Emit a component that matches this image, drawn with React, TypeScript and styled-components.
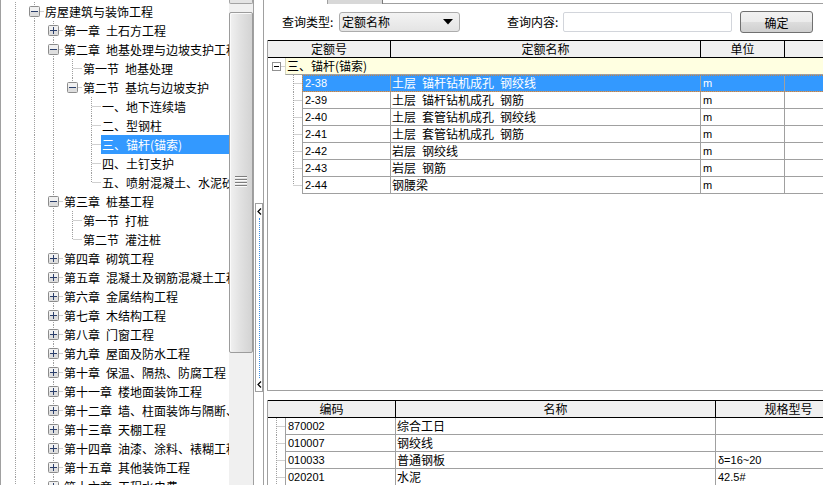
import React from "react";
import styled, { createGlobalStyle, css } from "styled-components";

const CJK = `"Noto Sans CJK SC", "Liberation Sans", sans-serif`;
const LATIN = `"Liberation Sans", "Noto Sans CJK SC", sans-serif`;

const GlobalStyle = createGlobalStyle`
  html, body { margin: 0; padding: 0; background: #fff; }
  body { font-family: ${CJK}; font-size: 12px; color: #000; }
`;

const Screen = styled.div`
  display: flex;
  width: 823px;
  height: 485px;
  overflow: hidden;
  background: #fff;
  font-family: ${CJK};
  font-size: 12px;
`;

/* ---------- left tree ---------- */
const TreePane = styled.div`
  width: 229px;
  flex: none;
  box-sizing: border-box;
  border-left: 1px solid #a0a0a0;
  padding: 2px 0 0 5px;
  overflow: hidden;
  background: #fff;
`;

const TreeRow = styled.div`
  display: flex;
  align-items: center;
  height: 19px;
`;

const TreeLabel = styled.span<{ $sel?: boolean }>`
  flex: 1;
  min-width: 0;
  height: 19px;
  line-height: 19px;
  padding-left: 1px;
  white-space: pre;
  overflow: hidden;
  ${(p) =>
    p.$sel &&
    css`
      background: #3399ff;
      color: #fff;
    `}
`;

const LineSvg = styled.svg`
  flex: none;
  display: block;
`;

type V = "full" | "top" | "none";

const TreeGlyph = ({
  size,
  v,
  h,
  box,
  boxSize,
  navy,
}: {
  size: number;
  v: V;
  h: boolean;
  box?: "plus" | "minus";
  boxSize: number;
  navy?: boolean;
}) => {
  const c = Math.floor(size / 2) + 0.5;
  const half = (boxSize - 1) / 2;
  const bx0 = c - half;
  const bx1 = c + half;
  const mark = navy ? "#2b3f6b" : "#000";
  const arm = boxSize >= 11 ? 3 : 2;
  return (
    <LineSvg width={size} height={size} viewBox={`0 0 ${size} ${size}`}>
      {v !== "none" && (
        <line
          x1={c}
          y1={0}
          x2={c}
          y2={v === "full" ? size : c}
          stroke="#a0a0a0"
          strokeDasharray="1 1"
        />
      )}
      {h && (
        <line
          x1={box ? bx1 + 1 : c + 1}
          y1={c}
          x2={size}
          y2={c}
          stroke="#a0a0a0"
          strokeDasharray="1 1"
        />
      )}
      {box && (
        <>
          <rect
            x={bx0}
            y={bx0}
            width={boxSize - 1}
            height={boxSize - 1}
            rx={navy ? 1 : 0}
            fill={navy ? "#f1f1f1" : "#fff"}
            stroke={navy ? "#8c8c8c" : "#919191"}
          />
          {navy && (
            <rect x={bx0 + 0.5} y={c} width={boxSize - 2} height={half - 0.5} fill="#dedede" />
          )}
          <line x1={c - arm - 0.5} y1={c} x2={c + arm + 0.5} y2={c} stroke={mark} />
          {box === "plus" && (
            <line x1={c} y1={c - arm - 0.5} x2={c} y2={c + arm + 0.5} stroke={mark} />
          )}
        </>
      )}
    </LineSvg>
  );
};

type TNode = { g: V[]; v: V; box?: "plus" | "minus"; label: string; sel?: boolean };

const S = "\u2002";
const F: V = "full";
const N: V = "none";

const treeData: TNode[] = [
  { g: [F], v: F, box: "minus", label: "房屋建筑与装饰工程" },
  { g: [F, F], v: F, box: "plus", label: `第一章${S}土石方工程` },
  { g: [F, F], v: F, box: "minus", label: `第二章${S}地基处理与边坡支护工程` },
  { g: [F, F, F], v: F, label: `第一节${S}地基处理` },
  { g: [F, F, F], v: "top", box: "minus", label: `第二节${S}基坑与边坡支护` },
  { g: [F, F, F, N], v: F, label: "一、地下连续墙" },
  { g: [F, F, F, N], v: F, label: "二、型钢柱" },
  { g: [F, F, F, N], v: F, label: "三、锚杆(锚索)", sel: true },
  { g: [F, F, F, N], v: F, label: "四、土钉支护" },
  { g: [F, F, F, N], v: "top", label: "五、喷射混凝土、水泥砂浆" },
  { g: [F, F], v: F, box: "minus", label: `第三章${S}桩基工程` },
  { g: [F, F, F], v: F, label: `第一节${S}打桩` },
  { g: [F, F, F], v: "top", label: `第二节${S}灌注桩` },
  { g: [F, F], v: F, box: "plus", label: `第四章${S}砌筑工程` },
  { g: [F, F], v: F, box: "plus", label: `第五章${S}混凝土及钢筋混凝土工程` },
  { g: [F, F], v: F, box: "plus", label: `第六章${S}金属结构工程` },
  { g: [F, F], v: F, box: "plus", label: `第七章${S}木结构工程` },
  { g: [F, F], v: F, box: "plus", label: `第八章${S}门窗工程` },
  { g: [F, F], v: F, box: "plus", label: `第九章${S}屋面及防水工程` },
  { g: [F, F], v: F, box: "plus", label: `第十章${S}保温、隔热、防腐工程` },
  { g: [F, F], v: F, box: "plus", label: `第十一章${S}楼地面装饰工程` },
  { g: [F, F], v: F, box: "plus", label: `第十二章${S}墙、柱面装饰与隔断、幕墙工程` },
  { g: [F, F], v: F, box: "plus", label: `第十三章${S}天棚工程` },
  { g: [F, F], v: F, box: "plus", label: `第十四章${S}油漆、涂料、裱糊工程` },
  { g: [F, F], v: F, box: "plus", label: `第十五章${S}其他装饰工程` },
  { g: [F, F], v: F, box: "plus", label: `第十六章${S}工程水电费` },
];

/* ---------- scrollbar ---------- */
const VScroll = styled.div`
  width: 24px;
  flex: none;
  background: #f0f0f0;
  display: flex;
  flex-direction: column;
`;

const ScrollBtnStub = styled.div`
  height: 4px;
  margin-bottom: 8px;
  box-sizing: border-box;
  border: 1px solid #a3a3a3;
  border-top: none;
  border-radius: 0 0 2px 2px;
  background: #e4e4e4;
`;

const Thumb = styled.div`
  height: 341px;
  box-sizing: border-box;
  border: 1px solid #9c9c9c;
  border-radius: 2px;
  background: linear-gradient(to right, #f1f1f1 0%, #e2e2e2 45%, #d3d3d3 100%);
  box-shadow: inset 1px 1px 0 #fafafa;
  display: flex;
  align-items: center;
  justify-content: center;
`;

const Gripper = () => (
  <svg width={12} height={13} viewBox="0 0 12 13" style={{ display: "block" }}>
    {[0, 3, 6, 9].map((y) => (
      <g key={y}>
        <line x1={0} y1={y + 0.5} x2={12} y2={y + 0.5} stroke="#7d7d7d" />
        <line x1={0} y1={y + 1.5} x2={12} y2={y + 1.5} stroke="#fbfbfb" />
      </g>
    ))}
  </svg>
);

/* ---------- splitter ---------- */
const Splitter = styled.div`
  width: 10px;
  flex: none;
  box-sizing: border-box;
  border-left: 1px solid #a0a0a0;
  padding: 203px 0 0 1px;
  background: #fff;
`;

const SplitHandle = styled.div`
  width: 8px;
  height: 189px;
  box-sizing: border-box;
  border: 1px solid #a0a0a0;
  display: flex;
  flex-direction: column;
  align-items: center;
  padding: 4px 0 3px;
  gap: 3px;
`;

const SplitDots = styled.div`
  flex: 1;
  width: 0;
  border-left: 1px dotted #3a8ee6;
`;

const Chevron = () => (
  <svg width={5} height={7} viewBox="0 0 5 7" style={{ display: "block", flex: "none" }}>
    <polyline points="4,0.5 1,3.5 4,6.5" fill="none" stroke="#000" strokeWidth={1.2} />
  </svg>
);

/* ---------- right pane ---------- */
const RightPane = styled.div`
  flex: 1;
  min-width: 0;
  border-left: 1px solid #a0a0a0;
  display: flex;
  flex-direction: column;
  overflow: hidden;
  background: #fff;
`;

const TabStrip = styled.div`
  display: flex;
  height: 4px;
  flex: none;
`;

const TabStub = styled.div`
  margin-left: 63px;
  width: 56px;
  height: 4px;
  box-sizing: border-box;
  background: #d8d8d8;
  border-left: 1px solid #a0a0a0;
  border-right: 1px solid #7a7a7a;
`;

const TabLine = styled.div`
  flex: 1;
  height: 4px;
  box-sizing: border-box;
  border-bottom: 1px solid #a0a0a0;
`;

const QueryBar = styled.div`
  display: flex;
  align-items: center;
  height: 22px;
  margin-top: 7px;
  padding-left: 18px;
  flex: none;
`;

const QLabel = styled.span<{ $w: number; $ml?: number }>`
  width: ${(p) => p.$w}px;
  margin-left: ${(p) => p.$ml ?? 0}px;
  flex: none;
  white-space: nowrap;
  line-height: 20px;
`;

const Combo = styled.div`
  width: 121px;
  height: 20px;
  box-sizing: border-box;
  border: 1px solid #acacac;
  border-radius: 3px;
  background: linear-gradient(#f3f3f3, #e4e4e4);
  display: flex;
  align-items: center;
  justify-content: space-between;
  padding: 0 6px 0 2px;
  flex: none;
  line-height: 18px;
`;

const QInput = styled.div`
  width: 169px;
  height: 20px;
  box-sizing: border-box;
  border: 1px solid #d2d5db;
  border-radius: 2px;
  background: #fff;
  flex: none;
`;

const QButton = styled.button`
  width: 73px;
  height: 22px;
  margin-left: 8px;
  box-sizing: border-box;
  border: 1px solid #707070;
  border-radius: 3px;
  background: linear-gradient(#f2f2f2 0%, #ebebeb 50%, #dddddd 51%, #cfcfcf 100%);
  font-family: ${CJK};
  font-size: 12px;
  color: #000;
  padding: 0;
  flex: none;
`;

const GridBox = styled.div<{ $h?: number; $mt: number; $bottom?: boolean }>`
  margin: ${(p) => p.$mt}px 0 0 3px;
  ${(p) => (p.$h ? `height: ${p.$h}px; flex: none;` : "flex: 1;")}
  box-sizing: border-box;
  border-left: 1px solid #a0a0a0;
  ${(p) => p.$bottom && "border-bottom: 1px solid #a0a0a0;"}
  overflow: hidden;
  min-width: 0;
`;

const HeadRow = styled.div`
  display: flex;
  border-top: 1px solid #000;
  box-shadow: -1px 0 0 #000;
`;

const HeadCell = styled.div<{ $w: number }>`
  width: ${(p) => p.$w}px;
  flex: none;
  height: 17px;
  box-sizing: border-box;
  background: #f0f0f0;
  border-right: 1px solid #000;
  border-bottom: 1px solid #000;
  text-align: center;
  line-height: 16px;
  white-space: nowrap;
  overflow: hidden;
`;

const Row = styled.div`
  display: flex;
  height: 17px;
`;

const Cells = styled.div<{ $sel?: boolean }>`
  display: flex;
  flex: none;
  ${(p) =>
    p.$sel &&
    css`
      background: #3399ff;
      color: #fff;
      outline: 1px dotted #c0824a;
      outline-offset: -1px;
    `}
`;

const Cell = styled.div<{ $w: number; $first?: boolean; $latin?: boolean }>`
  width: ${(p) => p.$w}px;
  flex: none;
  height: 17px;
  box-sizing: border-box;
  border-bottom: 1px solid #a0a0a0;
  border-right: 1px solid #a0a0a0;
  ${(p) => p.$first && "border-left: 1px solid #a0a0a0;"}
  padding-left: ${(p) => (p.$latin ? 2 : 1)}px;
  line-height: 16px;
  white-space: pre;
  overflow: hidden;
  font-family: ${(p) => (p.$latin ? LATIN : CJK)};
  font-size: ${(p) => (p.$latin ? 11 : 12)}px;
`;

const GroupCell = styled.div`
  flex: none;
  width: 540px;
  height: 17px;
  box-sizing: border-box;
  background: #ffffe1;
  border-bottom: 1px solid #a0a0a0;
  border-left: 1px solid #d8d8c0;
  padding-left: 1px;
  line-height: 16px;
  white-space: pre;
`;

const quotaRows = [
  ["2-38", `土层${S}锚杆钻机成孔${S}钢绞线`],
  ["2-39", `土层${S}锚杆钻机成孔${S}钢筋`],
  ["2-40", `土层${S}套管钻机成孔${S}钢绞线`],
  ["2-41", `土层${S}套管钻机成孔${S}钢筋`],
  ["2-42", `岩层${S}钢绞线`],
  ["2-43", `岩层${S}钢筋`],
  ["2-44", "钢腰梁"],
];

const resRows = [
  ["870002", "综合工日", ""],
  ["010007", "钢绞线", ""],
  ["010033", "普通钢板", "δ=16~20"],
  ["020201", "水泥", "42.5#"],
];

export default function App() {
  return (
    <>
      <GlobalStyle />
      <Screen>
        <TreePane>
          {treeData.map((n, i) => (
            <TreeRow key={i}>
              {n.g.map((g, j) => (
                <TreeGlyph key={j} size={19} v={g} h={false} boxSize={11} navy />
              ))}
              <TreeGlyph size={19} v={n.v} h box={n.box} boxSize={11} navy />
              <TreeLabel $sel={n.sel}>{n.label}</TreeLabel>
            </TreeRow>
          ))}
        </TreePane>

        <VScroll>
          <ScrollBtnStub />
          <Thumb>
            <Gripper />
          </Thumb>
        </VScroll>

        <Splitter>
          <SplitHandle>
            <Chevron />
            <SplitDots />
            <Chevron />
          </SplitHandle>
        </Splitter>

        <RightPane>
          <TabStrip>
            <TabStub />
            <TabLine />
          </TabStrip>

          <QueryBar>
            <QLabel $w={57}>查询类型:</QLabel>
            <Combo>
              <span>定额名称</span>
              <svg width={10} height={6} viewBox="0 0 10 6" style={{ display: "block" }}>
                <polygon points="0,0 10,0 5,5.5" fill="#000" />
              </svg>
            </Combo>
            <QLabel $w={56} $ml={47}>
              查询内容:
            </QLabel>
            <QInput />
            <QButton>确定</QButton>
          </QueryBar>

          <GridBox $h={351} $mt={7} $bottom>
            <HeadRow>
              <HeadCell $w={123}>定额号</HeadCell>
              <HeadCell $w={310}>定额名称</HeadCell>
              <HeadCell $w={84}>单位</HeadCell>
              <HeadCell $w={120} />
            </HeadRow>
            <Row>
              <TreeGlyph size={17} v="none" h box="minus" boxSize={9} />
              <GroupCell>三、锚杆(锚索)</GroupCell>
            </Row>
            {quotaRows.map(([code, name], i) => (
              <Row key={code}>
                <TreeGlyph size={17} v="none" h={false} boxSize={9} />
                <TreeGlyph
                  size={17}
                  v={i === quotaRows.length - 1 ? "top" : "full"}
                  h
                  boxSize={9}
                />
                <Cells $sel={i === 0}>
                  <Cell $w={89} $first $latin>
                    {code}
                  </Cell>
                  <Cell $w={310}>{name}</Cell>
                  <Cell $w={84} $latin>
                    m
                  </Cell>
                  <Cell $w={120} />
                </Cells>
              </Row>
            ))}
          </GridBox>

          <GridBox $mt={9}>
            <HeadRow>
              <HeadCell $w={128}>编码</HeadCell>
              <HeadCell $w={320}>名称</HeadCell>
              <HeadCell $w={146}>规格型号</HeadCell>
            </HeadRow>
            {resRows.map(([code, name, spec]) => (
              <Row key={code}>
                <TreeGlyph size={17} v="full" h boxSize={9} />
                <Cells>
                  <Cell $w={111} $first $latin>
                    {code}
                  </Cell>
                  <Cell $w={320}>{name}</Cell>
                  <Cell $w={146} $latin>
                    {spec}
                  </Cell>
                </Cells>
              </Row>
            ))}
          </GridBox>
        </RightPane>
      </Screen>
    </>
  );
}
